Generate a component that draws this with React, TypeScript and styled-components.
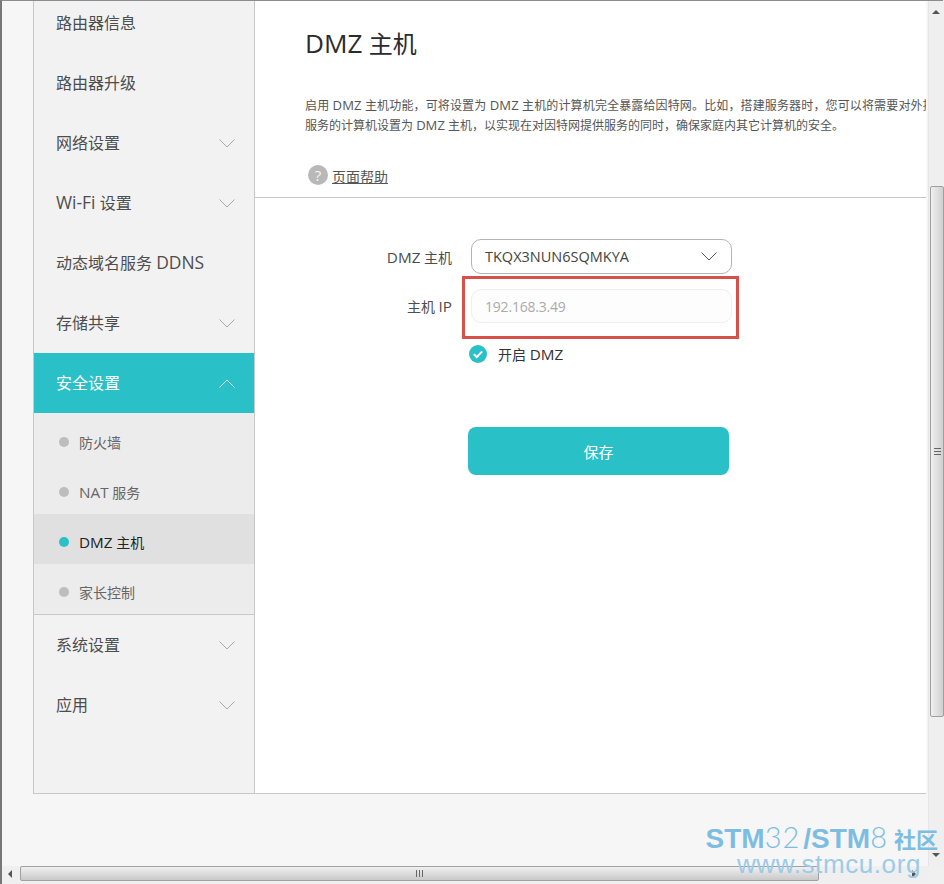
import React, { FC } from 'react';
import styled, { createGlobalStyle } from 'styled-components';

const colors = {
  teal: '#29c0c7',
  page: '#f6f6f6',
  menu: '#f2f2f2',
  subMenu: '#ececec',
  subActive: '#e0e0e0',
  line: '#c8c8c8',
  text: '#4d4d4d',
  red: '#d9504a',
};

const GlobalStyle = createGlobalStyle`
  html, body {
    margin: 0;
    padding: 0;
    width: 944px;
    height: 884px;
    overflow: hidden;
    background: #f0f0f0;
    font-family: "Open Sans", "Liberation Sans", "Noto Sans CJK SC", sans-serif;
  }
  * {
    box-sizing: border-box;
  }
`;

const Frame = styled.div`
  position: relative;
  display: grid;
  grid-template-columns: 926px 16px;
  grid-template-rows: 865px 16px;
  width: 943px;
  height: 884px;
  padding-bottom: 3px;
  border-top: 1px solid #8c8c8c;
  border-left: 2px solid #777;
  background: #f0f0f0;
`;

const Viewport = styled.div`
  height: 865px;
  padding: 0 0 72px 31px;
  background: ${colors.page};
  overflow: hidden;
`;

const Panel = styled.div`
  display: flex;
  width: 893px;
  height: 793px;
  background: #fff;
  border-left: 1px solid ${colors.line};
  border-bottom: 1px solid ${colors.line};
  overflow: hidden;
`;

const Sidebar = styled.nav`
  flex: 0 0 221px;
  height: 100%;
  background: ${colors.menu};
  border-right: 1px solid ${colors.line};
  overflow: hidden;
`;

const MenuList = styled.div`
  margin-top: -8px;
`;

const MenuItem = styled.div<{ $active?: boolean }>`
  display: flex;
  align-items: center;
  justify-content: space-between;
  height: 60px;
  padding: 0 19px 0 22px;
  font-size: 16px;
  color: ${(props) => (props.$active ? '#fff' : colors.text)};
  background: ${(props) => (props.$active ? colors.teal : 'transparent')};
`;

const MenuLabel = styled.span`
  margin-bottom: 2px;
`;

// the latin glyphs run wider than the cjk ones in the original font
const Latin = styled.span`
  font-size: 1.09em;
  line-height: 1;
`;

const SubMenu = styled.div`
  padding-top: 1px;
  background: ${colors.subMenu};
  border-bottom: 1px solid ${colors.line};
`;

const SubItem = styled.div<{ $active?: boolean }>`
  display: flex;
  align-items: center;
  height: 50px;
  padding: 6px 0 0 25px;
  font-size: 14px;
  color: ${(props) => (props.$active ? '#222' : '#666')};
  background: ${(props) => (props.$active ? colors.subActive : 'transparent')};
`;

const Dot = styled.span<{ $active?: boolean }>`
  width: 10px;
  height: 10px;
  margin-right: 10px;
  border-radius: 50%;
  background: ${(props) => (props.$active ? colors.teal : '#bdbdbd')};
`;

const Content = styled.main`
  flex: 1;
  min-width: 0;
`;

const Header = styled.header`
  height: 197px;
  padding: 26px 0 0 50px;
  border-bottom: 1px solid ${colors.line};
  overflow: hidden;
`;

const Title = styled.h1`
  margin: 0;
  font-size: 24px;
  font-weight: 400;
  line-height: 33px;
  color: #2b2b2b;
`;

const Description = styled.p`
  margin: 36px 0 0;
  font-size: 12px;
  line-height: 20px;
  color: #555;
  white-space: nowrap;
`;

const DescriptionLine = styled.span<{ $spacing?: number }>`
  display: block;
  height: 20px;
  letter-spacing: ${(props) => props.$spacing ?? 0}px;
`;

const HelpRow = styled.div`
  display: flex;
  align-items: center;
  gap: 4px;
  margin: 27px 0 0 3px;
`;

const HelpIcon = styled.span`
  display: flex;
  align-items: center;
  justify-content: center;
  width: 20px;
  height: 20px;
  border-radius: 50%;
  background: #b8b8b8;
  color: #f4f4f4;
  font-size: 15px;
  line-height: 20px;
`;

const HelpLink = styled.a`
  padding-top: 3px;
  font-size: 14px;
  color: #555;
  text-decoration: underline;
`;

const Form = styled.form`
  display: flex;
  flex-direction: column;
  padding: 41px 0 0 70px;
`;

const Row = styled.div<{ $mt?: number }>`
  display: flex;
  align-items: center;
  margin-top: ${(props) => props.$mt ?? 0}px;
`;

const Label = styled.label`
  width: 127px;
  margin-right: 19px;
  text-align: right;
  font-size: 14px;
  color: ${colors.text};
`;

const Select = styled.div`
  display: flex;
  align-items: center;
  justify-content: space-between;
  width: 261px;
  height: 35px;
  padding: 0 14px 0 13px;
  border: 1px solid #b4b4b4;
  border-radius: 10px;
  font-size: 14.5px;
  color: #444;
`;

const InputWrap = styled.div`
  position: relative;
`;

const Input = styled.div`
  display: flex;
  align-items: center;
  width: 261px;
  height: 34px;
  padding: 0 13px;
  border: 1px solid #eeeeee;
  border-radius: 10px;
  background: #fdfdfd;
  font-size: 14px;
  letter-spacing: -0.2px;
  color: #aaa;
`;

const Highlight = styled.div`
  position: absolute;
  left: -9px;
  top: -13px;
  width: 277px;
  height: 63px;
  border: 3px solid ${colors.red};
`;

const CheckRow = styled.div`
  display: flex;
  align-items: center;
  gap: 11px;
  margin: 21px 0 0 144px;
  font-size: 14px;
  color: #333;
`;

const CheckMark = styled.svg`
  width: 18px;
  height: 18px;
`;

const SaveButton = styled.button`
  width: 261px;
  height: 48px;
  margin: 63px 0 0 143px;
  border: 0;
  border-radius: 8px;
  background: ${colors.teal};
  color: #fff;
  font-family: inherit;
  font-size: 15px;
`;

const VBar = styled.div`
  position: relative;
  background: #efefef;
  border-left: 1px solid #e6e6e6;
`;

const VThumb = styled.div`
  position: absolute;
  top: 185px;
  left: 1px;
  display: flex;
  align-items: center;
  justify-content: center;
  width: 14px;
  height: 531px;
  border: 1px solid #a0a0a0;
  border-radius: 2px;
  background: linear-gradient(90deg, #f0f0f0, #d0d0d0);
`;

const HBar = styled.div`
  position: relative;
  background: #efefef;
`;

const HThumb = styled.div`
  position: absolute;
  left: 18px;
  top: 0;
  display: flex;
  align-items: center;
  justify-content: center;
  width: 799px;
  height: 15px;
  border: 1px solid #a0a0a0;
  border-radius: 2px;
  background: linear-gradient(180deg, #f0f0f0, #c9c9c9);
`;

const Arrow = styled.span<{ $dir: 'up' | 'down' | 'left' | 'right'; $x: number; $y: number }>`
  position: absolute;
  left: ${(props) => props.$x}px;
  top: ${(props) => props.$y}px;
  width: 0;
  height: 0;
  border: 4px solid transparent;
  ${(props) => `border-${{ up: 'bottom', down: 'top', left: 'right', right: 'left' }[props.$dir]}-color: #555;`}
`;

const Grip = styled.span<{ $vertical?: boolean }>`
  width: 7px;
  height: 7px;
  ${(props) =>
    props.$vertical
      ? 'background: repeating-linear-gradient(180deg, #666 0 1px, transparent 1px 3px);'
      : 'background: repeating-linear-gradient(90deg, #666 0 1px, transparent 1px 3px);'}
`;

const Watermark = styled.div`
  position: absolute;
  right: 5px;
  top: 821px;
  font-family: "Liberation Sans", "Noto Sans CJK SC", sans-serif;
  color: #7dbde2;
  text-align: right;
  line-height: 1;
  pointer-events: none;
`;

const WatermarkTop = styled.div`
  display: flex;
  align-items: baseline;
  height: 29px;
  font-size: 28px;
  font-weight: 700;
  white-space: nowrap;
`;

const WatermarkThin = styled.span`
  margin-right: 3px;
  font-family: "Lato", "Liberation Sans", sans-serif;
  font-weight: 300;
  font-size: 29px;
  letter-spacing: 1px;
`;

const WatermarkCjk = styled.span`
  margin-left: 3px;
  font-size: 22px;
`;

const WatermarkUrl = styled.div`
  margin-right: 17px;
  font-size: 26px;
  height: 22px;
  letter-spacing: 0.6px;
  color: #9ccbe8;
`;

const Chevron: FC<{ up?: boolean; color?: string }> = ({ up, color = '#a9a9a9' }) => (
  <svg width="16" height="9" viewBox="0 0 16 9" fill="none">
    <path d={up ? 'M0.5 8.5L8 1L15.5 8.5' : 'M0.5 0.5L8 8L15.5 0.5'} stroke={color} strokeWidth="1" />
  </svg>
);

const App: FC = () => {
  return (
    <>
      <GlobalStyle />
      <Frame>
        <Viewport>
          <Panel>
            <Sidebar>
              <MenuList>
                <MenuItem><MenuLabel>路由器信息</MenuLabel></MenuItem>
                <MenuItem><MenuLabel>路由器升级</MenuLabel></MenuItem>
                <MenuItem><MenuLabel>网络设置</MenuLabel><Chevron /></MenuItem>
                <MenuItem><MenuLabel><Latin>Wi-Fi</Latin> 设置</MenuLabel><Chevron /></MenuItem>
                <MenuItem><MenuLabel>动态域名服务 <Latin>DDNS</Latin></MenuLabel></MenuItem>
                <MenuItem><MenuLabel>存储共享</MenuLabel><Chevron /></MenuItem>
                <MenuItem $active><MenuLabel>安全设置</MenuLabel><Chevron up color="#d5f3f4" /></MenuItem>
                <SubMenu>
                  <SubItem><Dot />防火墙</SubItem>
                  <SubItem><Dot /><span><Latin>NAT</Latin> 服务</span></SubItem>
                  <SubItem $active><Dot $active /><span><Latin>DMZ</Latin> 主机</span></SubItem>
                  <SubItem><Dot />家长控制</SubItem>
                </SubMenu>
                <MenuItem><MenuLabel>系统设置</MenuLabel><Chevron /></MenuItem>
                <MenuItem><MenuLabel>应用</MenuLabel><Chevron /></MenuItem>
              </MenuList>
            </Sidebar>
            <Content>
              <Header>
                <Title><Latin>DMZ</Latin> 主机</Title>
                <Description>
                  <DescriptionLine $spacing={0.14}>
                    启用 <Latin>DMZ</Latin> 主机功能，可将设置为 <Latin>DMZ</Latin> 主机的计算机完全暴露给因特网。比如，搭建服务器时，您可以将需要对外提供
                  </DescriptionLine>
                  <DescriptionLine>
                    服务的计算机设置为 <Latin>DMZ</Latin> 主机，以实现在对因特网提供服务的同时，确保家庭内其它计算机的安全。
                  </DescriptionLine>
                </Description>
                <HelpRow>
                  <HelpIcon>?</HelpIcon>
                  <HelpLink>页面帮助</HelpLink>
                </HelpRow>
              </Header>
              <Form>
                <Row>
                  <Label><Latin>DMZ</Latin> 主机</Label>
                  <Select>
                    TKQX3NUN6SQMKYA
                    <Chevron color="#555" />
                  </Select>
                </Row>
                <Row $mt={15}>
                  <Label>主机 <Latin>IP</Latin></Label>
                  <InputWrap>
                    <Input>192.168.3.49</Input>
                    <Highlight />
                  </InputWrap>
                </Row>
                <CheckRow>
                  <CheckMark viewBox="0 0 18 18">
                    <circle cx="9" cy="9" r="9" fill={colors.teal} />
                    <path d="M4.8 9.2L7.8 12L13.2 6.4" fill="none" stroke="#fff" strokeWidth="2" />
                  </CheckMark>
                  <span>开启 <Latin>DMZ</Latin></span>
                </CheckRow>
                <SaveButton type="button">保存</SaveButton>
              </Form>
            </Content>
          </Panel>
        </Viewport>
        <VBar>
          <Arrow $dir="up" $x={3} $y={5} />
          <VThumb><Grip $vertical /></VThumb>
          <Arrow $dir="down" $x={3} $y={852} />
        </VBar>
        <HBar>
          <Arrow $dir="left" $x={2} $y={4} />
          <HThumb><Grip /></HThumb>
          <Arrow $dir="right" $x={910} $y={4} />
        </HBar>
        <div />
        <Watermark>
          <WatermarkTop>
            STM<WatermarkThin>32</WatermarkThin>/STM<WatermarkThin>8</WatermarkThin>
            <WatermarkCjk>社区</WatermarkCjk>
          </WatermarkTop>
          <WatermarkUrl>www.stmcu.org</WatermarkUrl>
        </Watermark>
      </Frame>
    </>
  );
};

export default App;
